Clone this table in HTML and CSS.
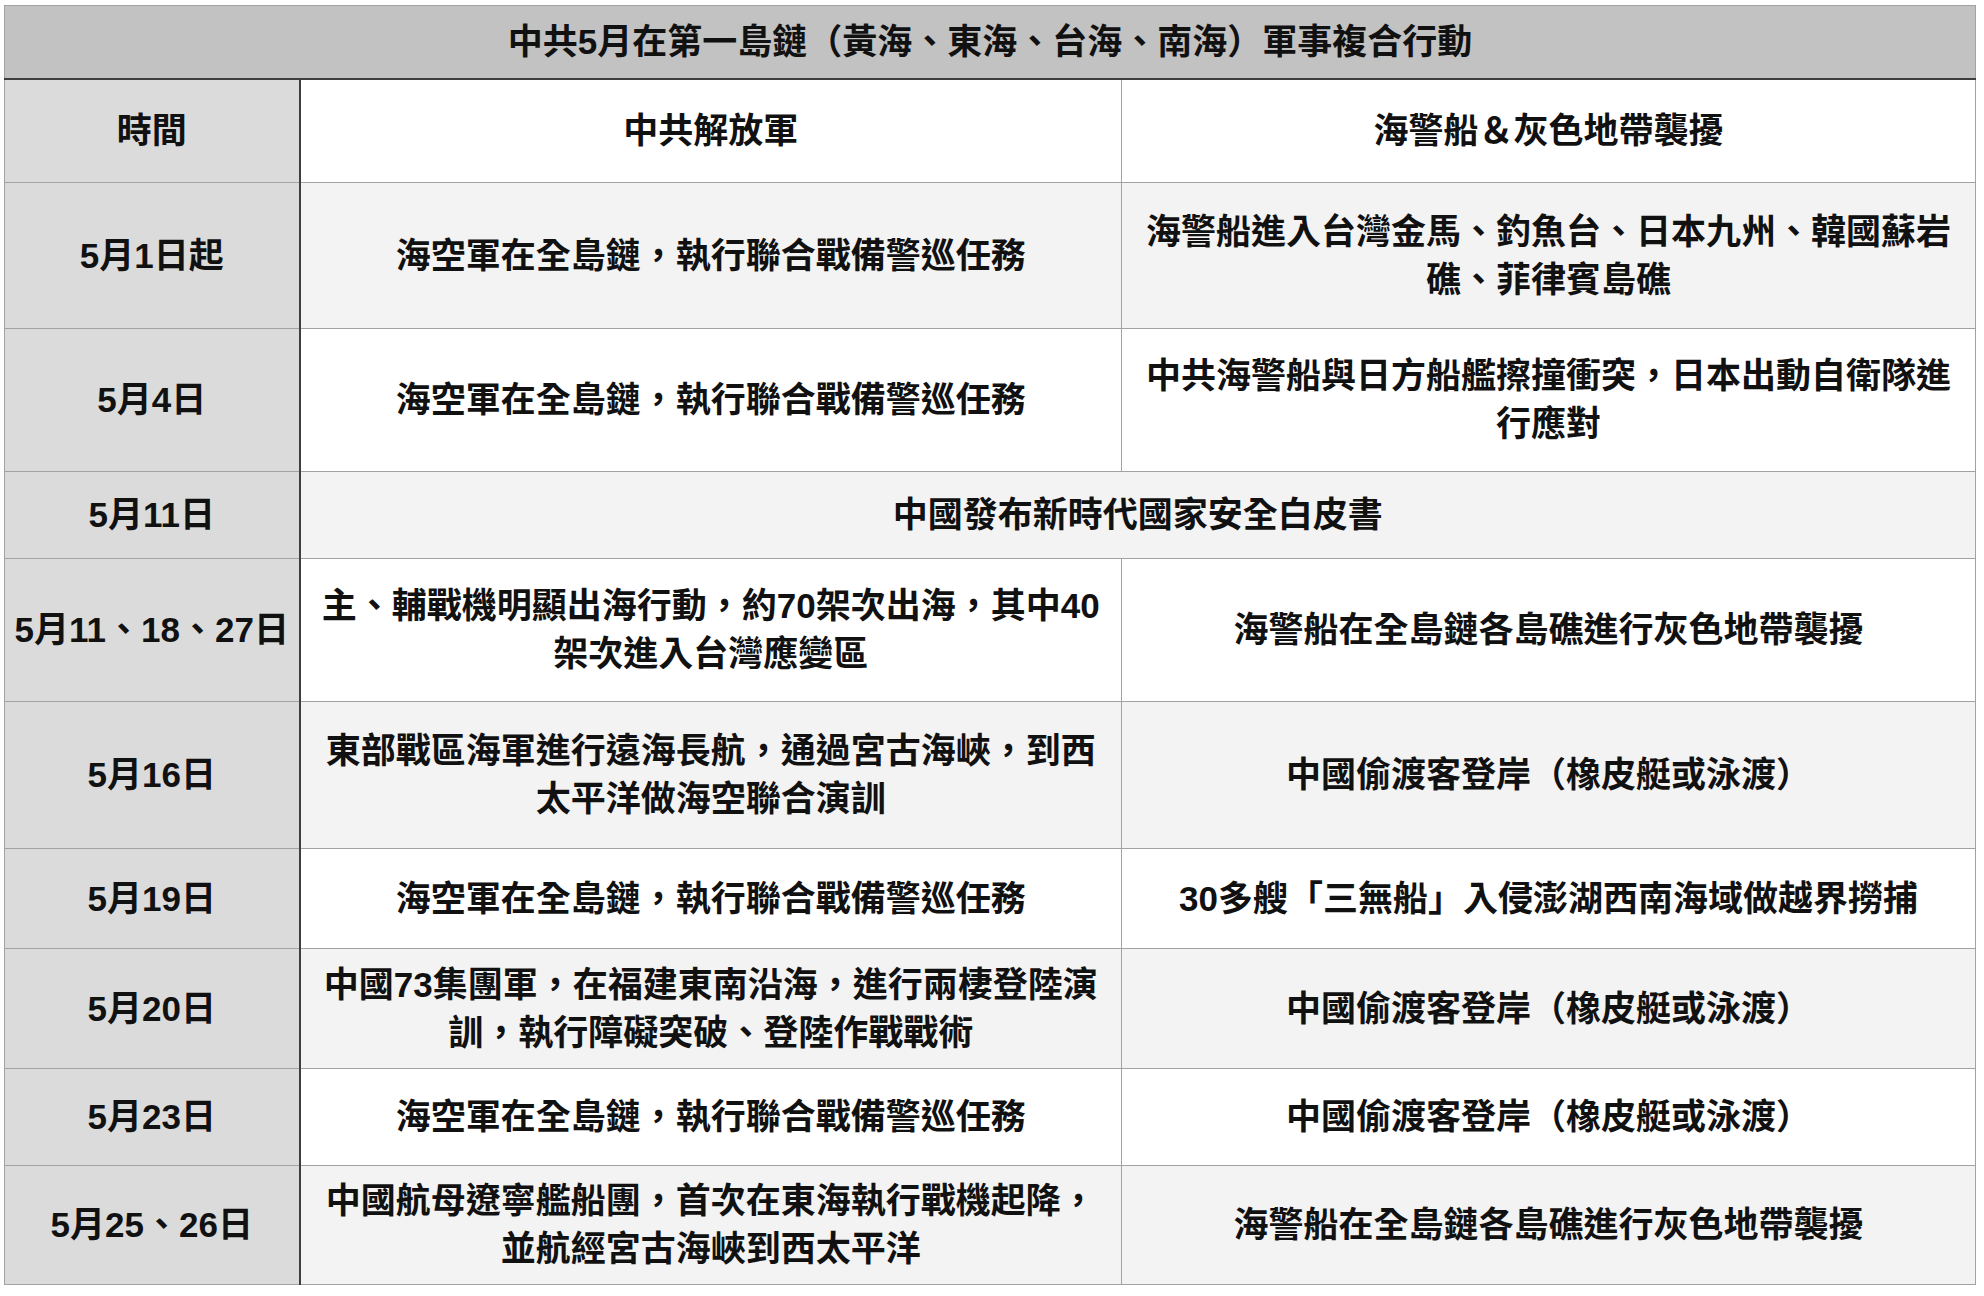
FILE: index.html
```html
<!DOCTYPE html>
<html lang="zh-Hant">
<head>
<meta charset="utf-8">
<title>中共5月在第一島鏈軍事複合行動</title>
<link rel="stylesheet" href="styles.css">
</head>
<body>
<table class="ops">
  <colgroup>
    <col class="c-date">
    <col class="c-pla">
    <col class="c-coast">
  </colgroup>
  <thead>
    <tr class="title-row">
      <th colspan="3" class="title">中共5月在第一島鏈（黃海、東海、台海、南海）軍事複合行動</th>
    </tr>
    <tr class="head-row">
      <th class="date">時間</th>
      <th>中共解放軍</th>
      <th>海警船＆灰色地帶襲擾</th>
    </tr>
  </thead>
  <tbody>
    <tr>
      <td class="date">5月1日起</td>
      <td>海空軍在全島鏈，執行聯合戰備警巡任務</td>
      <td>海警船進入台灣金馬、釣魚台、日本九州、韓國蘇岩礁、菲律賓島礁</td>
    </tr>
    <tr>
      <td class="date">5月4日</td>
      <td>海空軍在全島鏈，執行聯合戰備警巡任務</td>
      <td>中共海警船與日方船艦擦撞衝突，日本出動自衛隊進行應對</td>
    </tr>
    <tr>
      <td class="date">5月11日</td>
      <td colspan="2">中國發布新時代國家安全白皮書</td>
    </tr>
    <tr>
      <td class="date">5月11、18、27日</td>
      <td>主、輔戰機明顯出海行動，約70架次出海，其中40架次進入台灣應變區</td>
      <td>海警船在全島鏈各島礁進行灰色地帶襲擾</td>
    </tr>
    <tr>
      <td class="date">5月16日</td>
      <td>東部戰區海軍進行遠海長航，通過宮古海峽，到西太平洋做海空聯合演訓</td>
      <td>中國偷渡客登岸（橡皮艇或泳渡）</td>
    </tr>
    <tr>
      <td class="date">5月19日</td>
      <td>海空軍在全島鏈，執行聯合戰備警巡任務</td>
      <td>30多艘「三無船」入侵澎湖西南海域做越界撈捕</td>
    </tr>
    <tr>
      <td class="date">5月20日</td>
      <td>中國73集團軍，在福建東南沿海，進行兩棲登陸演訓，執行障礙突破、登陸作戰戰術</td>
      <td>中國偷渡客登岸（橡皮艇或泳渡）</td>
    </tr>
    <tr>
      <td class="date">5月23日</td>
      <td>海空軍在全島鏈，執行聯合戰備警巡任務</td>
      <td>中國偷渡客登岸（橡皮艇或泳渡）</td>
    </tr>
    <tr>
      <td class="date">5月25、26日</td>
      <td>中國航母遼寧艦船團，首次在東海執行戰機起降，並航經宮古海峽到西太平洋</td>
      <td>海警船在全島鏈各島礁進行灰色地帶襲擾</td>
    </tr>
  </tbody>
</table>
</body>
</html>
```
FILE: styles.css
```css
html, body {
  margin: 0;
  background: #ffffff;
}

body {
  padding: 5px 0 0 4px;
  font-family: "Liberation Sans", "Noto Sans CJK TC", sans-serif;
  font-weight: 700;
  font-size: 35px;
  line-height: 48px;
  color: #111111;
}

.ops {
  border-collapse: collapse;
  table-layout: fixed;
  width: 1971px;
  border: 1px solid #9c9c9c;
}

.c-date { width: 295px; }
.c-pla { width: 822px; }
.c-coast { width: 854px; }

.ops th,
.ops td {
  padding: 0 20px;
  text-align: center;
  vertical-align: middle;
  font-weight: 700;
  border: 1px solid #a2a2a2;
  background: #ffffff;
}

.ops .title {
  background: #c1c2c1;
  border-bottom: 2px solid #3e3e3e;
  padding: 0;
}

.ops .date {
  background: #dbdbdb;
  border-right: 2px solid #3e3e3e;
  padding: 0 4px;
  white-space: nowrap;
}

.ops tbody tr:nth-child(odd) td:not(.date) {
  background: #f3f3f3;
}

.title-row { height: 73px; }
.head-row { height: 104px; }

.ops tbody tr:nth-child(1) { height: 146px; }
.ops tbody tr:nth-child(2) { height: 143px; }
.ops tbody tr:nth-child(3) { height: 87px; }
.ops tbody tr:nth-child(4) { height: 143px; }
.ops tbody tr:nth-child(5) { height: 147px; }
.ops tbody tr:nth-child(6) { height: 100px; }
.ops tbody tr:nth-child(7) { height: 120px; }
.ops tbody tr:nth-child(8) { height: 97px; }
.ops tbody tr:nth-child(9) { height: 119px; }
```
